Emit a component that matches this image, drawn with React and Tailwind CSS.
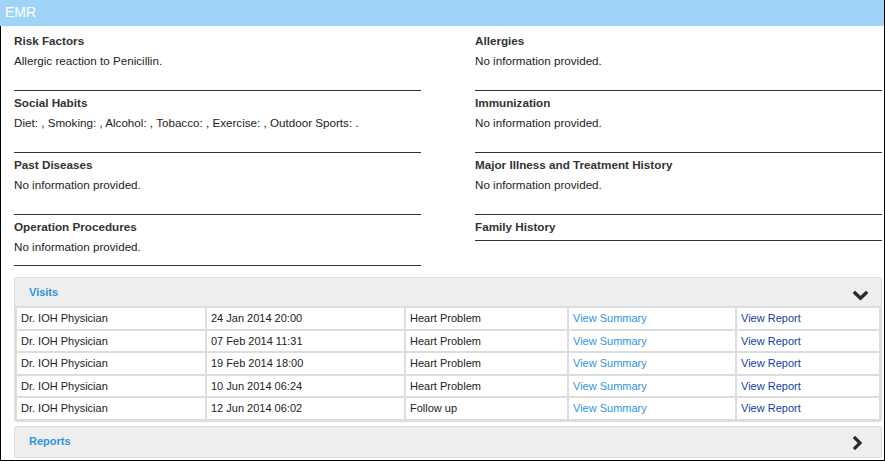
import React from "react";

const left = [
  { t: "Risk Factors", d: "Allergic reaction to Penicillin.", h: "h-[62px]" },
  { t: "Social Habits", d: "Diet: , Smoking: , Alcohol: , Tobacco: , Exercise: , Outdoor Sports: .", h: "h-[62px]" },
  { t: "Past Diseases", d: "No information provided.", h: "h-[62px]" },
  { t: "Operation Procedures", d: "No information provided.", h: "h-[51px]" },
];
const right = [
  { t: "Allergies", d: "No information provided.", h: "h-[62px]" },
  { t: "Immunization", d: "No information provided.", h: "h-[62px]" },
  { t: "Major Illness and Treatment History", d: "No information provided.", h: "h-[62px]" },
  { t: "Family History", d: null, h: "h-[26px]" },
];

const visits = [
  ["24 Jan 2014 20:00", "Heart Problem"],
  ["07 Feb 2014 11:31", "Heart Problem"],
  ["19 Feb 2014 18:00", "Heart Problem"],
  ["10 Jun 2014 06:24", "Heart Problem"],
  ["12 Jun 2014 06:02", "Follow up"],
];

function Section({ s }) {
  return (
    <div className={`${s.h} border-b border-[#333] pt-[3px]`}>
      <div className="text-[11.7px] leading-[18px] font-bold text-[#333]">{s.t}</div>
      {s.d && <div className="mt-[1px] text-[11.65px] leading-[20px] text-[#222]">{s.d}</div>}
    </div>
  );
}

export default function App() {
  return (
    <div className="w-[885px] h-[461px] overflow-hidden bg-white border-r border-black font-['Liberation_Sans',Arial,sans-serif]">
      <div className="h-[26px] bg-[#9fd4f8] pl-[5px] text-white text-[14px] leading-[25px]">EMR</div>
      <div className="h-[435px] border-l border-b border-black pl-[13px] pr-[2px] pt-[3px]">
        <div className="grid grid-cols-[407px_407px] gap-x-[54px] items-start">
          <div className="flex flex-col">
            {left.map((s) => <Section key={s.t} s={s} />)}
          </div>
          <div className="flex flex-col">
            {right.map((s) => <Section key={s.t} s={s} />)}
          </div>
        </div>

        <div className="mt-[11px] rounded-[3px] border border-[#ddd] bg-[#eee] overflow-hidden">
          <div className="h-[28px] flex items-center justify-between pl-[14px] pr-[13px]">
            <span className="text-[11px] font-bold text-[#2f95de]">Visits</span>
            <svg width="15" height="10" viewBox="0 0 15 10" className="mt-[8px]">
              <polyline points="2,2 7.5,7.2 13,2" fill="none" stroke="#2b2b2b" strokeWidth="3.4" strokeLinecap="square" strokeLinejoin="miter" />
            </svg>
          </div>
          <div className="grid grid-cols-[188px_197px_161px_166px_1fr] gap-[2px] bg-[#ddd] p-[2px] auto-rows-[20.5px] text-[11px]">
            {visits.map(([date, reason], i) => (
              <React.Fragment key={i}>
                <div className="bg-white pl-[4px] flex items-center text-[#222]">Dr. IOH Physician</div>
                <div className="bg-white pl-[4px] flex items-center text-[#222]">{date}</div>
                <div className="bg-white pl-[4px] flex items-center text-[#222]">{reason}</div>
                <div className="bg-white pl-[4px] flex items-center text-[#2f95de]">View Summary</div>
                <div className="bg-white pl-[4px] flex items-center text-[#163c9c]">View Report</div>
              </React.Fragment>
            ))}
          </div>
        </div>

        <div className="mt-[4px] rounded-[3px] border border-[#ddd] bg-[#eee] h-[32px] flex items-center justify-between pl-[14px] pr-[18px]">
          <span className="text-[11px] font-bold text-[#2f95de]">Reports</span>
          <svg width="10" height="14" viewBox="0 0 10 14" className="mt-[2px]">
            <polyline points="2,2 7,7 2,12" fill="none" stroke="#2b2b2b" strokeWidth="3.2" strokeLinecap="square" strokeLinejoin="miter" />
          </svg>
        </div>
      </div>
    </div>
  );
}
